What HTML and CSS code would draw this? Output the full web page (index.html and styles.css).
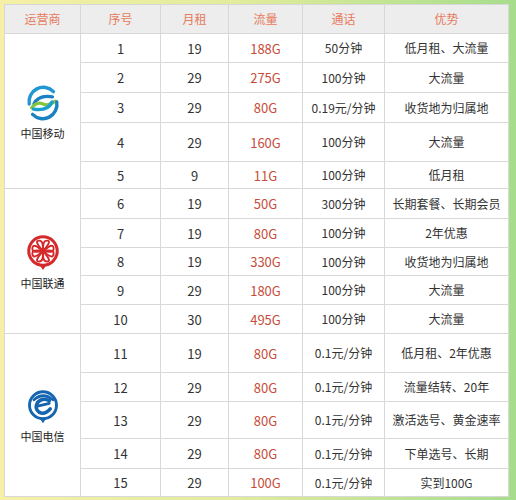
FILE: index.html
```html
<!DOCTYPE html>
<html lang="zh">
<head>
<meta charset="utf-8">
<link rel="stylesheet" href="styles.css">
</head>
<body>
<div class="sheet">
  <div class="c h">运营商</div><div class="c h">序号</div><div class="c h">月租</div><div class="c h">流量</div><div class="c h">通话</div><div class="c h">优势</div>

  <div class="c op">
    <svg class="logo" viewBox="0 0 40 40" width="40" height="38">
      <g fill="none" stroke-linecap="round">
        <path d="M5.5 21 A15 15 0 0 1 31 8" stroke="#2196d3" stroke-width="3.6"/>
        <path d="M10.5 21 Q15 11 30 13.5" stroke="#1a7fc4" stroke-width="3.6"/>
        <path d="M8 25 Q14 18 20 21 Q26 24 33 18" stroke="#86c440" stroke-width="3.4"/>
        <path d="M29.5 19 Q25 29 10 26.5" stroke="#1aa0cc" stroke-width="3.6"/>
        <path d="M34.5 19 A15 15 0 0 1 9 32" stroke="#1a82c2" stroke-width="3.6"/>
      </g>
    </svg>
    <span class="opname">中国移动</span>
  </div>
  <div class="c n">1</div><div class="c n">19</div><div class="c n g">188G</div><div class="c">50分钟</div><div class="c">低月租、大流量</div>
  <div class="c n">2</div><div class="c n">29</div><div class="c n g">275G</div><div class="c">100分钟</div><div class="c">大流量</div>
  <div class="c n">3</div><div class="c n">29</div><div class="c n g">80G</div><div class="c">0.19元/分钟</div><div class="c">收货地为归属地</div>
  <div class="c n">4</div><div class="c n">29</div><div class="c n g">160G</div><div class="c">100分钟</div><div class="c">大流量</div>
  <div class="c n">5</div><div class="c n">9</div><div class="c n g">11G</div><div class="c">100分钟</div><div class="c">低月租</div>

  <div class="c op">
    <svg class="logo" viewBox="0 0 40 40" width="40" height="38">
      <g fill="none" stroke="#d42a2c">
        <circle cx="20" cy="18" r="15" stroke-width="3.2"/>
        <path d="M20 18 C13 10 12 7 16 7 C20 7 20 12 20 18 C20 12 20 7 24 7 C28 7 27 10 20 18 Z" stroke-width="2"/>
        <path d="M20 18 C13 26 12 29 16 29 C20 29 20 24 20 18 C20 24 20 29 24 29 C28 29 27 26 20 18 Z" stroke-width="2"/>
        <path d="M20 18 C13 12 10 11 9 14 C8 18 10 20 20 18 C10 16 8 18 9 22 C10 25 13 24 20 18 Z" stroke-width="2"/>
        <path d="M20 18 C27 12 30 11 31 14 C32 18 30 20 20 18 C30 16 32 18 31 22 C30 25 27 24 20 18 Z" stroke-width="2"/>
      </g>
      <path d="M16 32 L20 38 L24 32 Z" fill="#d42a2c"/>
    </svg>
    <span class="opname">中国联通</span>
  </div>
  <div class="c n">6</div><div class="c n">19</div><div class="c n g">50G</div><div class="c">300分钟</div><div class="c">长期套餐、长期会员</div>
  <div class="c n">7</div><div class="c n">19</div><div class="c n g">80G</div><div class="c">100分钟</div><div class="c">2年优惠</div>
  <div class="c n">8</div><div class="c n">19</div><div class="c n g">330G</div><div class="c">100分钟</div><div class="c">收货地为归属地</div>
  <div class="c n">9</div><div class="c n">29</div><div class="c n g">180G</div><div class="c">100分钟</div><div class="c">大流量</div>
  <div class="c n">10</div><div class="c n">30</div><div class="c n g">495G</div><div class="c">100分钟</div><div class="c">大流量</div>

  <div class="c op">
    <svg class="logo" viewBox="0 0 40 40" width="38" height="36">
      <circle cx="20" cy="18" r="15" fill="none" stroke="#1565b0" stroke-width="3.2"/>
      <path d="M16 32 L20 38 L24 32 Z" fill="#1565b0"/>
      <g fill="none" stroke="#1565b0" stroke-linecap="round">
        <path d="M10 12 Q20 3 31 12" stroke-width="3"/>
        <path d="M27 13 Q19 9 14 15 Q10 22 16 26 Q22 29 28 22" stroke-width="4"/>
        <path d="M14 19 L27 16" stroke-width="3"/>
      </g>
    </svg>
    <span class="opname">中国电信</span>
  </div>
  <div class="c n">11</div><div class="c n">19</div><div class="c n g">80G</div><div class="c">0.1元/分钟</div><div class="c">低月租、2年优惠</div>
  <div class="c n">12</div><div class="c n">29</div><div class="c n g">80G</div><div class="c">0.1元/分钟</div><div class="c">流量结转、20年</div>
  <div class="c n">13</div><div class="c n">29</div><div class="c n g">80G</div><div class="c">0.1元/分钟</div><div class="c">激活选号、黄金速率</div>
  <div class="c n">14</div><div class="c n">29</div><div class="c n g">80G</div><div class="c">0.1元/分钟</div><div class="c">下单选号、长期</div>
  <div class="c n">15</div><div class="c n">29</div><div class="c n g">100G</div><div class="c">0.1元/分钟</div><div class="c">实到100G</div>
</div>
</body>
</html>
```

FILE: styles.css
```css
html, body {
  margin: 0;
  padding: 0;
}
body {
  width: 516px;
  height: 500px;
  overflow: hidden;
  background: linear-gradient(90deg, #f5f0a6 0%, #e2ec9c 45%, #a6dd8c 100%);
  font-family: "Noto Sans CJK SC", "Noto Sans", sans-serif;
  font-size: 12px;
  color: #333;
}
.sheet {
  margin: 4px 0 0 4px;
  display: grid;
  width: max-content;
  grid-template-columns: 76px 80px 68px 74px 82px 124px;
  grid-template-rows: 29px 29px 30px 30px 39px 27px 30px 29px 28px 29px 29px 39px 29px 37px 30px 28px;
  border-top: 1px solid #d8d8d8;
  border-left: 1px solid #d8d8d8;
  background: #fff;
}
.c {
  box-sizing: border-box;
  border-right: 1px solid #d8d8d8;
  border-bottom: 1px solid #d8d8d8;
  display: flex;
  align-items: center;
  justify-content: center;
  white-space: nowrap;
  line-height: 1;
}
.n {
  font-size: 13px;
}
.h {
  background: #ededed;
  color: #e67a5c;
  font-size: 12px;
}
.g {
  color: #c84c3a;
}
.op {
  grid-column: 1;
  grid-row: span 5;
  flex-direction: column;
  gap: 6px;
}
.logo {
  display: block;
}
.opname {
  font-size: 11px;
  color: #222;
}
```
